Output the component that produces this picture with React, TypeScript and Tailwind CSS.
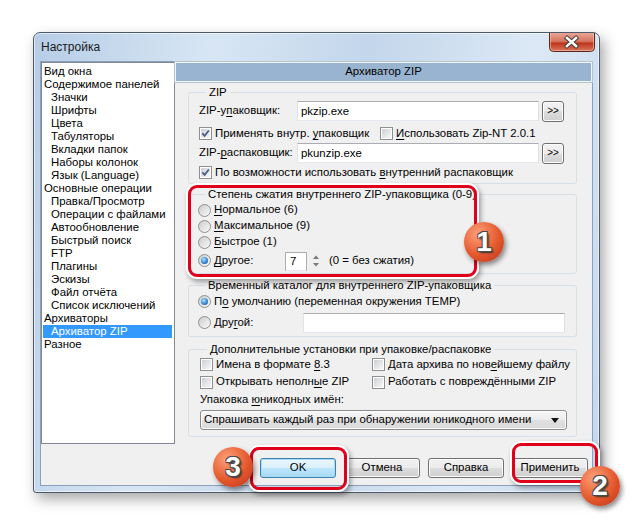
import React from 'react'

const U = ({ children }: { children: React.ReactNode }) => (
  <span className="underline underline-offset-[2px]">{children}</span>
)

const CheckBox = ({ checked, children }: { checked?: boolean; children: React.ReactNode }) => (
  <div className="flex items-center gap-[3px]">
    <div className="w-[13px] h-[13px] shrink-0 border border-[#8e8f8f] bg-white p-[1px]">
      <div className="w-full h-full bg-[linear-gradient(135deg,#cdd0d4,#f7f7f7)]">
        {checked && (
          <svg viewBox="0 0 9 9" className="w-full h-full block">
            <path d="M1.3 4.4 L3.6 6.8 L7.8 1.5" stroke="#4a5d8e" strokeWidth="1.8" fill="none" />
          </svg>
        )}
      </div>
    </div>
    <span>{children}</span>
  </div>
)

const Radio = ({ checked, children }: { checked?: boolean; children: React.ReactNode }) => (
  <div className="flex items-center gap-[3px]">
    <div className="w-[13px] h-[13px] shrink-0 rounded-full border border-[#8e8f8f] bg-[linear-gradient(135deg,#cbcbcb,#fbfbfb)] flex items-center justify-center">
      {checked && (
        <div className="w-[7px] h-[7px] rounded-full bg-[radial-gradient(circle_at_40%_35%,#b3e1ff,#2c7fd6_60%,#17497f)]" />
      )}
    </div>
    <span>{children}</span>
  </div>
)

const Input = ({ w, value }: { w: string; value?: string }) => (
  <div className={`${w} h-[20px] bg-white border border-[#abadb3] border-b-[#e3e9ef] border-l-[#e2e3ea] border-r-[#dbdfe6] pl-[3px] leading-[18px]`}>
    {value}
  </div>
)

const SmallBtn = () => (
  <div className="w-[22px] h-[21px] rounded-[3px] border border-[#707070] bg-[linear-gradient(#f2f2f2,#ebebeb_50%,#dddddd_50%,#cfcfcf)] shadow-[inset_0_0_0_1px_#fcfcfc] flex items-center justify-center text-[10px] leading-none">
    &gt;&gt;
  </div>
)

const Btn = ({ children, def }: { children: React.ReactNode; def?: boolean }) => (
  <div
    className={
      def
        ? 'w-[76px] h-[20px] rounded-[3px] border border-[#3c7fb1] bg-[linear-gradient(#eaf6fd,#d9f0fc_50%,#bee6fd_50%,#a7d9f5)] shadow-[inset_0_0_0_1px_#a9dcf7] flex items-center justify-center'
        : 'w-[76px] h-[20px] rounded-[3px] border border-[#707070] bg-[linear-gradient(#f2f2f2,#ebebeb_50%,#dddddd_50%,#cfcfcf)] shadow-[inset_0_0_0_1px_#fcfcfc] flex items-center justify-center'
    }
  >
    {children}
  </div>
)

const Badge = ({ n, cls }: { n: string; cls: string }) => (
  <div
    className={`absolute ${cls} w-[40px] h-[40px] rounded-full bg-[radial-gradient(circle_at_35%_30%,#fca079,#e5582d_55%,#b9321a)] shadow-[2px_3px_5px_rgba(0,0,0,0.45)] flex items-center justify-center text-white font-bold text-[28px] leading-none [text-shadow:-1px_-1px_0_#4a4a4a,1px_-1px_0_#4a4a4a,-1px_1px_0_#4a4a4a,1px_1px_0_#4a4a4a,2px_2px_2px_#333]`}
  >
    {n}
  </div>
)

// win7 close button drawn as an icon
const CloseBtn = () => (
  <svg width="46" height="19" viewBox="0 0 46 19" className="block mr-[4px]">
    <defs>
      <linearGradient id="closeGrad" x1="0" y1="0" x2="0" y2="1">
        <stop offset="0" stopColor="#eaa595" />
        <stop offset="0.45" stopColor="#d4735d" />
        <stop offset="0.55" stopColor="#c0341a" />
        <stop offset="1" stopColor="#da7a5f" />
      </linearGradient>
    </defs>
    <path d="M0.5 0 V14.5 Q0.5 18.5 4.5 18.5 H41.5 Q45.5 18.5 45.5 14.5 V0" fill="url(#closeGrad)" stroke="#5e2519" />
    <path d="M1.5 0 V14.5 Q1.5 17.5 4.5 17.5 H41.5 Q44.5 17.5 44.5 14.5 V0" fill="none" stroke="#f4c4b6" strokeOpacity="0.6" />
    <path d="M18 5 L27 13 M27 5 L18 13" stroke="#3d3d3d" strokeWidth="4.4" strokeLinecap="square" />
    <path d="M18 5 L27 13 M27 5 L18 13" stroke="#ffffff" strokeWidth="2.5" strokeLinecap="square" />
  </svg>
)

const tree: [string, number, boolean?][] = [
  ['Вид окна', 0],
  ['Содержимое панелей', 0],
  ['Значки', 1],
  ['Шрифты', 1],
  ['Цвета', 1],
  ['Табуляторы', 1],
  ['Вкладки папок', 1],
  ['Наборы колонок', 1],
  ['Язык (Language)', 1],
  ['Основные операции', 0],
  ['Правка/Просмотр', 1],
  ['Операции с файлами', 1],
  ['Автообновление', 1],
  ['Быстрый поиск', 1],
  ['FTP', 1],
  ['Плагины', 1],
  ['Эскизы', 1],
  ['Файл отчёта', 1],
  ['Список исключений', 1],
  ['Архиваторы', 0],
  ['Архиватор ZIP', 1, true],
  ['Разное', 0],
]

export default function App() {
  return (
    <div className="relative w-[634px] h-[523px] bg-white overflow-hidden pl-[33px] pt-[32px] font-['Liberation_Sans',Arial,sans-serif] text-[11.4px] text-black whitespace-nowrap">
      {/* window */}
      <div className="w-[567px] h-[461px] border border-[#4b5968] rounded-t-[7px] rounded-b-[3px] bg-[linear-gradient(100deg,#b6cde6_0%,#d8e6f4_28%,#c3d6eb_52%,#dce8f5_78%,#c5d8ec_100%)] shadow-[4px_6px_14px_rgba(0,0,0,0.35),inset_0_0_0_1px_rgba(255,255,255,0.55)]">
        <div className="h-[29px] flex items-start justify-between">
          <div className="pl-[7px] pt-[7px] leading-[15px] text-[12px] text-[#1a1a1a]">Настройка</div>
          <CloseBtn />
        </div>

        {/* client */}
        <div className="mx-[7px] h-[423px] bg-[#f0f0f0] shadow-[0_0_0_1px_#8ba0bb] flex flex-col">
          <div className="flex h-[382px]">
            {/* tree list */}
            <div className="w-[134px] h-full bg-white border border-[#828790] pt-[2px]">
              {tree.map(([t, lvl, sel]) => (
                <div
                  key={t}
                  className={`h-[13px] leading-[13px] ml-[1px] mr-[2px] ${lvl ? 'pl-[8px]' : 'pl-[1px]'} ${sel ? 'bg-[#3399ff] text-white' : ''}`}
                >
                  {t}
                </div>
              ))}
            </div>

            {/* settings panel */}
            <div className="flex-1 flex flex-col">
              <div className="h-[20px] bg-[#99b4d1] border border-[#f3f6f9] shadow-[0_0_0_1px_#b4c2d2] flex items-center justify-center">
                Архиватор ZIP
              </div>

              <div className="flex flex-col pl-[13px] pr-[15px]">
                {/* ZIP */}
                <fieldset className="mt-[3px] border border-[#d5dfe5] rounded-[3px] pl-[10px]">
                  <legend className="ml-[7px] px-[3px] leading-[14px]">ZIP</legend>
                  <div className="mt-[2px] h-[20px] flex items-center">
                    <div className="w-[98px]">
                      ZIP-у<U>п</U>аковщик:
                    </div>
                    <Input w="w-[242px]" value="pkzip.exe" />
                    <div className="ml-[3px]">
                      <SmallBtn />
                    </div>
                  </div>
                  <div className="h-[19px] mt-[3px] flex items-center">
                    <div className="w-[181px]">
                      <CheckBox checked>
                        Применять внутр. <U>у</U>паковщик
                      </CheckBox>
                    </div>
                    <CheckBox>
                      <U>И</U>спользовать Zip-NT 2.0.1
                    </CheckBox>
                  </div>
                  <div className="h-[20px] flex items-center">
                    <div className="w-[98px]">
                      ZIP-<U>р</U>аспаковщик:
                    </div>
                    <Input w="w-[242px]" value="pkunzip.exe" />
                    <div className="ml-[3px]">
                      <SmallBtn />
                    </div>
                  </div>
                  <div className="h-[20px] flex items-center">
                    <CheckBox checked>
                      По возможности использовать <U>в</U>нутренний распаковщик
                    </CheckBox>
                  </div>
                </fieldset>

                {/* compression level */}
                <fieldset className="mt-[3px] border border-[#d5dfe5] rounded-[3px] pl-[9px] pb-[2px]">
                  <legend className="ml-[7px] px-[3px] leading-[14px]">
                    Степень сжатия внутреннего ZIP-упаковщика (0-9)
                  </legend>
                  <div className="h-[16px] mt-[1px] flex items-center">
                    <Radio>
                      <U>Н</U>ормальное (6)
                    </Radio>
                  </div>
                  <div className="h-[16px] flex items-center">
                    <Radio>
                      <U>М</U>аксимальное (9)
                    </Radio>
                  </div>
                  <div className="h-[16px] flex items-center">
                    <Radio>
                      <U>Б</U>ыстрое (1)
                    </Radio>
                  </div>
                  <div className="h-[20px] mt-[1px] flex items-center">
                    <div className="w-[87px]">
                      <Radio checked>
                        <U>Д</U>ругое:
                      </Radio>
                    </div>
                    <div className="w-[22px] h-[19px] bg-white border border-[#abadb3] border-b-[#e3e9ef] pl-[4px] leading-[17px]">
                      7
                    </div>
                    <svg width="10" height="18" viewBox="0 0 10 18" className="ml-[4px]">
                      <path d="M2 7 L5 3.5 L8 7 Z" fill="#7a7a7a" />
                      <path d="M2 11 L5 14.5 L8 11 Z" fill="#7a7a7a" />
                    </svg>
                    <div className="ml-[8px]">(0 = без сжатия)</div>
                  </div>
                </fieldset>

                {/* temp folder */}
                <fieldset className="mt-[4px] border border-[#d5dfe5] rounded-[3px] pl-[9px] pb-[3px]">
                  <legend className="ml-[7px] px-[3px] leading-[14px]">
                    Временный каталог для внутреннего ZIP-упаковщика
                  </legend>
                  <div className="h-[18px] mt-[1px] flex items-center">
                    <Radio checked>
                      П<U>о</U> умолчанию (переменная окружения TEMP)
                    </Radio>
                  </div>
                  <div className="h-[21px] mt-[1px] flex items-center">
                    <div className="w-[105px]">
                      <Radio>
                        Дру<U>г</U>ой:
                      </Radio>
                    </div>
                    <Input w="w-[262px]" />
                  </div>
                </fieldset>

                {/* extra */}
                <fieldset className="mt-[5px] border border-[#d5dfe5] rounded-[3px] pl-[11px] pb-[6px]">
                  <legend className="ml-[7px] px-[3px] leading-[14px]">
                    Дополнительные установки при упаковке/распаковке
                  </legend>
                  <div className="h-[18px] flex items-center">
                    <div className="w-[172px]">
                      <CheckBox>
                        Имена в формате <U>8</U>.3
                      </CheckBox>
                    </div>
                    <CheckBox>
                      Дата архива по нов<U>е</U>йшему файлу
                    </CheckBox>
                  </div>
                  <div className="h-[16px] flex items-center">
                    <div className="w-[172px]">
                      <CheckBox>
                        Открывать неполн<U>ы</U>е ZIP
                      </CheckBox>
                    </div>
                    <CheckBox>Работать с повреждёнными ZIP</CheckBox>
                  </div>
                  <div className="h-[18px] leading-[18px]">
                    Упаковка <U>ю</U>никодных имён:
                  </div>
                  <div className="mt-[2px] w-[367px] h-[20px] rounded-[3px] border border-[#8b8b8b] bg-[linear-gradient(#f7f7f7,#ececec_50%,#e0e0e0_50%,#dadada)] shadow-[inset_0_0_0_1px_#fdfdfd] flex items-center justify-between pl-[3px] pr-[7px]">
                    <span>Спрашивать каждый раз при обнаружении юникодного имени</span>
                    <svg width="8" height="5" viewBox="0 0 8 5">
                      <path d="M0 0 L8 0 L4 5 Z" fill="#111" />
                    </svg>
                  </div>
                </fieldset>
              </div>
            </div>
          </div>

          {/* buttons */}
          <div className="mt-[14px] ml-[219px] flex gap-[8px]">
            <Btn def>OK</Btn>
            <Btn>Отмена</Btn>
            <Btn>Справка</Btn>
            <Btn>Применить</Btn>
          </div>
        </div>
      </div>

      {/* annotations */}
      <div className="absolute left-[188px] top-[185px] w-[289px] h-[92px] rounded-[9px] border-[3px] border-[#e0001a] shadow-[0_0_0_2px_#fff,2px_3px_5px_2px_rgba(0,0,0,0.35)]" />
      <div className="absolute left-[250px] top-[447px] w-[97px] h-[43px] rounded-[9px] border-[3px] border-[#e0001a] shadow-[0_0_0_2px_#fff,2px_3px_5px_2px_rgba(0,0,0,0.35)]" />
      <div className="absolute left-[512px] top-[443px] w-[86px] h-[40px] rounded-[9px] border-[3px] border-[#e0001a] shadow-[0_0_0_2px_#fff,2px_3px_5px_2px_rgba(0,0,0,0.35)]" />
      <Badge n="1" cls="left-[464px] top-[222px]" />
      <Badge n="3" cls="left-[213px] top-[447px]" />
      <Badge n="2" cls="left-[580px] top-[466px]" />
    </div>
  )
}
